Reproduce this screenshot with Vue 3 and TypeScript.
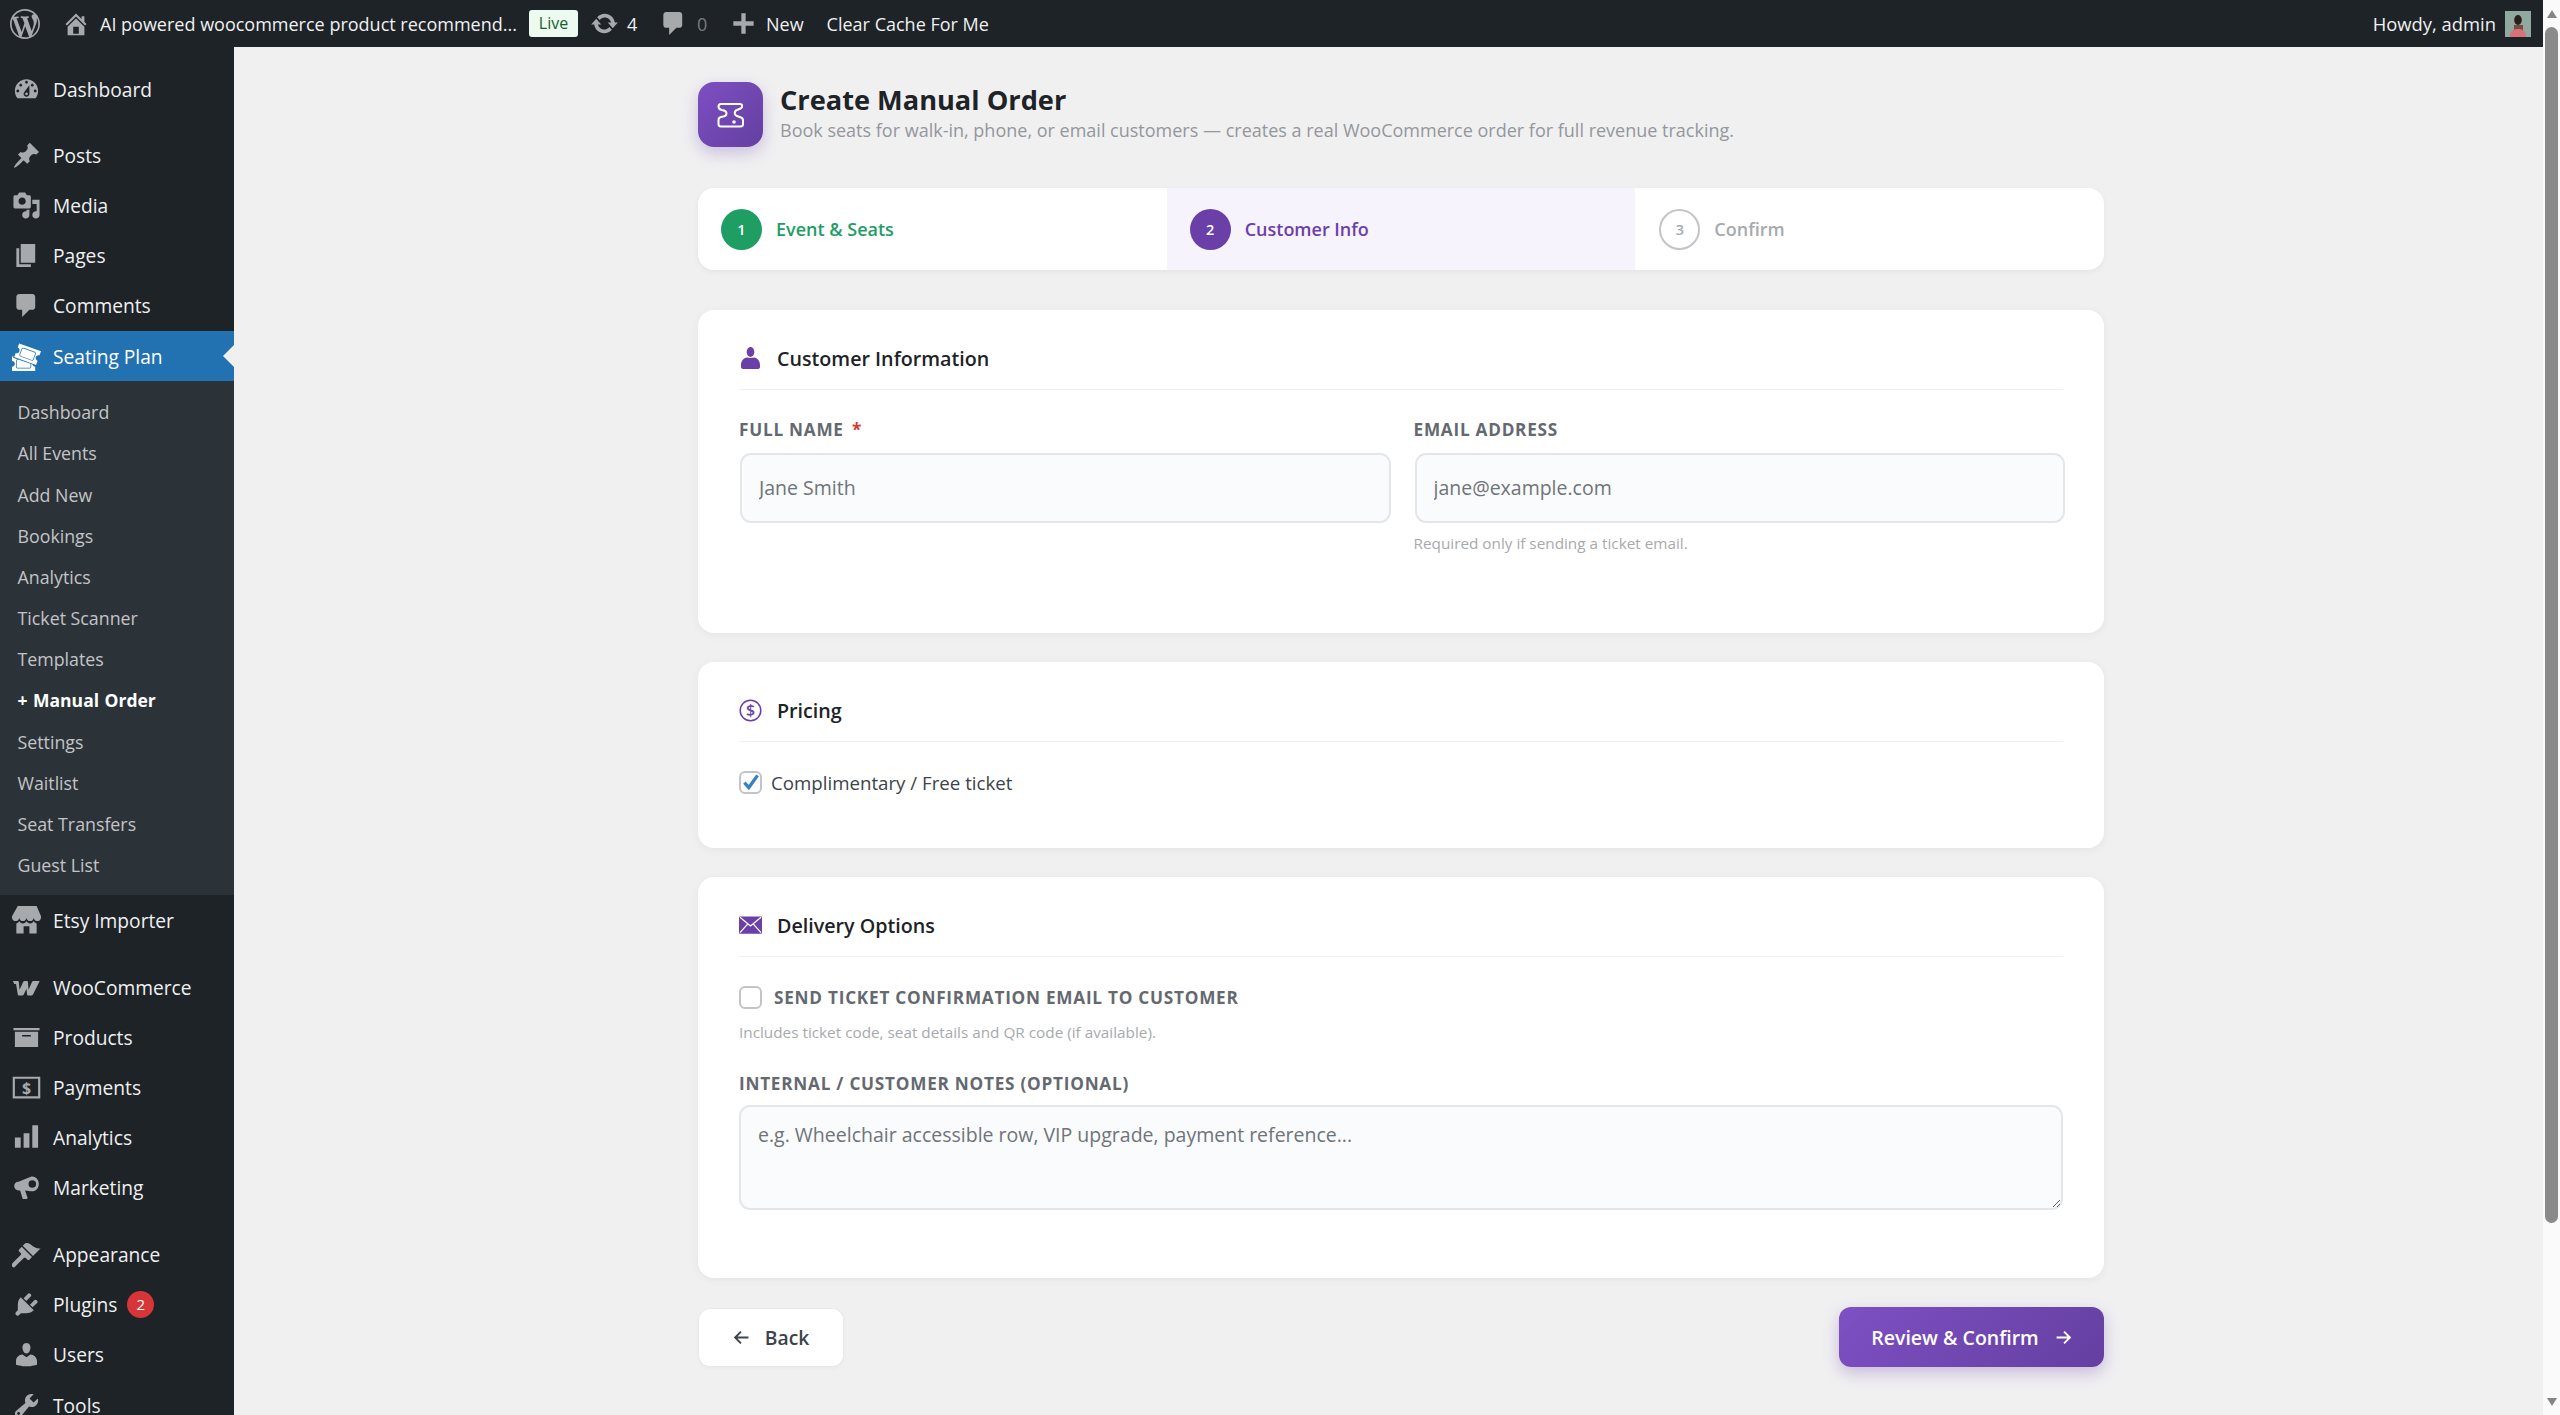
<script setup lang="ts">
interface MenuItem {
  label: string
  d: string
  glyph?: string
  badge?: string
  gap?: boolean
  active?: boolean
}

const icons: Record<string, string> = {
  dashboard:
    'M3.76 16h12.48c1.1-1.37 1.76-3.11 1.76-5 0-4.42-3.58-8-8-8s-8 3.58-8 8c0 1.89.66 3.63 1.76 5zM10 4c.55 0 1 .45 1 1s-.45 1-1 1-1-.45-1-1 .45-1 1-1zM6 6c.55 0 1 .45 1 1s-.45 1-1 1-1-.45-1-1 .45-1 1-1zm8 0c.55 0 1 .45 1 1s-.45 1-1 1-1-.45-1-1 .45-1 1-1zm-5.37 5.55L12 7v6c0 1.1-.9 2-2 2s-2-.9-2-2c0-.57.24-1.08.63-1.45zM4 10c.55 0 1 .45 1 1s-.45 1-1 1-1-.45-1-1 .45-1 1-1zm12 0c.55 0 1 .45 1 1s-.45 1-1 1-1-.45-1-1 .45-1 1-1zm-5 3c0-.55-.45-1-1-1s-1 .45-1 1 .45 1 1 1 1-.45 1-1z',
  pin: 'M10.44 3.02l1.82-1.82 6.36 6.35-1.83 1.82c-1.05-.68-2.48-.57-3.41.36l-.75.75c-.92.93-1.04 2.35-.35 3.41l-1.83 1.82-2.41-2.41-2.8 2.79c-.42.42-3.38 2.71-3.8 2.29s1.86-3.39 2.28-3.81l2.79-2.79L4.1 9.36l1.83-1.82c1.05.69 2.48.57 3.4-.36l.75-.75c.93-.92 1.05-2.35.36-3.41z',
  media:
    'M13 11V4c0-.55-.45-1-1-1h-1.67L9 1H5L3.67 3H2c-.55 0-1 .45-1 1v7c0 .55.45 1 1 1h10c.55 0 1-.45 1-1zM7 4.5c1.38 0 2.5 1.12 2.5 2.5S8.38 9.5 7 9.5 4.5 8.38 4.5 7 5.62 4.5 7 4.5zM14 6h5v10.5c0 1.38-1.12 2.5-2.5 2.5S14 17.88 14 16.5s1.12-2.5 2.5-2.5c.17 0 .34.02.5.05V9h-3V6zm-4 8.05V13h2v3.5c0 1.38-1.12 2.5-2.5 2.5S7 17.88 7 16.5 8.12 14 9.5 14c.17 0 .34.02.5.05z',
  page: 'M6 15V2h10v13H6zm-1 1h8v2H3V5h2v11z',
  comment:
    'M5 2h9c1.1 0 2 .9 2 2v7c0 1.1-.9 2-2 2h-2l-5 5v-5H5c-1.1 0-2-.9-2-2V4c0-1.1.9-2 2-2z',
  tickets:
    'M20 6.38L18.99 9.2v-.01c-.52-.19-1.03-.16-1.53.08s-.85.62-1.04 1.14-.16 1.03.07 1.53c.24.5.62.84 1.15 1.03v.01l-1.01 2.82-15.06-5.38.99-2.79c.52.19 1.03.16 1.53-.08.5-.23.84-.61 1.03-1.13s.16-1.03-.08-1.53c-.23-.49-.61-.83-1.13-1.02L4.93 1zm-4.97 5.69l1.37-3.76c.12-.31.1-.65-.04-.95s-.39-.53-.7-.65L8.14 3.98c-.64-.23-1.37.12-1.6.74L5.17 8.48c-.24.65.1 1.37.74 1.6l7.52 2.74c.14.05.28.08.43.08.52 0 1-.33 1.17-.83zM7.97 4.45l7.51 2.73c.19.07.34.21.43.39.08.18.09.38.02.57l-1.37 3.76c-.13.38-.58.59-.96.45L6.09 9.61c-.38-.14-.59-.57-.45-.96l1.37-3.76c.1-.29.39-.49.7-.49.09 0 .17.02.26.05zm6.82 12.14c.35.27.75.41 1.2.41H16v3H0v-2.96c.55 0 1.03-.2 1.41-.59.39-.38.59-.86.59-1.41s-.2-1.02-.59-1.41-.86-.59-1.41-.59V10h1.05l-.28.8 2.87 1.02c-.51.16-.89.62-.89 1.18v4c0 .69.56 1.25 1.25 1.25h8c.69 0 1.25-.56 1.25-1.25v-1.75l.83.3c.12.43.36.78.71 1.04zM3.25 17v-4c0-.41.34-.75.75-.75h.83l7.92 2.83V17c0 .41-.34.75-.75.75H4c-.41 0-.75-.34-.75-.75z',
  store:
    'M1 10c.41.29.96.43 1.5.43.55 0 1.09-.14 1.5-.43.62-.46 1-1.17 1-2 0 .83.37 1.54 1 2 .41.29.96.43 1.5.43.55 0 1.09-.14 1.5-.43.62-.46 1-1.17 1-2 0 .83.37 1.54 1 2 .41.29.96.43 1.51.43.54 0 1.08-.14 1.49-.43.62-.46 1-1.17 1-2 0 .83.37 1.54 1 2 .41.29.96.43 1.5.43.55 0 1.09-.14 1.5-.43.63-.46 1-1.17 1-2V7l-3-7H4L0 7v1c0 .83.37 1.54 1 2zm2 8.99h5v-5h4v5h5v-7c-.37-.05-.72-.22-1-.43-.63-.45-1-.73-1-1.56 0 .83-.38 1.11-1 1.56-.41.3-.95.43-1.49.44-.55 0-1.1-.14-1.51-.44-.63-.45-1-.73-1-1.56 0 .83-.38 1.11-1 1.56-.41.3-.95.43-1.5.44-.54 0-1.09-.14-1.5-.44-.63-.45-1-.73-1-1.57 0 .84-.38 1.12-1 1.57-.29.21-.63.38-1 .44v6.99z',
  woo: 'M.6 5.6h3.3c.5 0 .8.3.8.8l.5 5.2 2.4-5.2c.2-.5.6-.8 1.1-.8h1.5c.5 0 .8.3.8.8l.4 5.2 2.3-5.2c.2-.5.7-.8 1.2-.8h4.200l-4.600 9.2c-.3.5-.7.8-1.2.8h-2c-.5 0-.8-.3-.9-.8l-.4-4-1.900 4c-.2.5-.7.8-1.2.8h-2c-.5 0-.8-.3-.9-.8L2.800 7.600H1.600z',
  box: 'M1 3.500h18V5H1zM2 6h16v10.500H2zM7 8.300v1h6v-1z',
  money: 'M.5 2.500h19v15H.5zM2 4v12h16V4z',
  bars: 'M2 10h4v7H2zM8 7h4v10H8zM14 1.500h4V17h-4z',
  megaphone:
    'M13 2.500c2.800-.6 5.500 1.700 5.500 5s-2.700 5.600-5.500 5L9 12l1.800 5.300-.6.7H7.400L5.600 12H4.500C2.600 12 1.500 10.500 1.500 9s1.100-3 3-3l8.500-3.500zM14 5a2.600 2.600 0 1 0 0 5.200A2.600 2.600 0 0 0 14 5z',
  brush:
    'M14.48 11.06L7.41 3.99l1.5-1.5c.5-.56 2.3-.47 3.51.32 1.21.8 1.43 1.28 2.91 2.1 1.18.64 2.45 1.26 4.45.85zm-.71.71L6.7 4.7 4.93 6.47c-.39.39-.39 1.02 0 1.41l1.06 1.06c.39.39.39 1.03 0 1.42-.6.6-6.19 6.19-6.19 6.19-.39.39-.39 1.02 0 1.41l.71.71c.39.39 1.02.39 1.41 0 0 0 5.59-5.59 6.19-6.19.39-.39 1.03-.39 1.42 0l1.06 1.06c.39.39 1.02.39 1.41 0z',
  plug: 'M13.11 4.36L9.87 7.6 8 5.73l3.24-3.24c.35-.34 1.05-.2 1.56.32.52.51.66 1.21.31 1.55zm-8 1.77l.91-1.12 9.01 9.01-1.19.84c-.71.71-2.63 1.16-3.82 1.16H6.14L4.9 17.26c-.59.59-1.54.59-2.12 0-.59-.58-.59-1.53 0-2.12l1.24-1.24v-3.88c0-1.13.4-3.19 1.09-3.89zm7.26 3.97l3.24-3.24c.34-.35 1.04-.21 1.55.31.52.51.66 1.21.31 1.55l-3.24 3.25z',
  users:
    'M10 9.25c-2.27 0-2.73-3.44-2.73-3.44C7 4.02 7.82 2 9.97 2c2.16 0 2.98 2.02 2.71 3.81 0 0-.41 3.44-2.68 3.44zm0 2.57L12.72 10c2.39 0 4.52 2.33 4.52 4.53v2.49s-3.65 1.13-7.24 1.13c-3.65 0-7.24-1.13-7.24-1.13v-2.49c0-2.25 1.94-4.48 4.47-4.48z',
  tools:
    'M16.68 9.77c-1.34 1.34-3.3 1.67-4.95.99l-5.41 6.52c-.99.99-2.59.99-3.58 0s-.99-2.59 0-3.57l6.52-5.42c-.68-1.65-.35-3.61.99-4.95 1.28-1.28 3.12-1.62 4.72-1.06l-2.89 2.89 2.82 2.82 2.86-2.87c.53 1.58.18 3.39-1.08 4.65zM3.81 16.21c.4.39 1.04.39 1.43 0 .4-.4.4-1.04 0-1.43-.39-.4-1.03-.4-1.43 0-.39.39-.39 1.03 0 1.43z',
}

const wpLogo =
  'M20 10c0-5.51-4.49-10-10-10C4.48 0 0 4.49 0 10c0 5.52 4.48 10 10 10 5.51 0 10-4.48 10-10zM7.78 15.37L4.37 6.22c.55-.02 1.17-.08 1.17-.08.5-.06.44-1.13-.06-1.11 0 0-1.45.11-2.37.11-.18 0-.37 0-.58-.01C4.12 2.69 6.87 1.11 10 1.11c2.33 0 4.45.87 6.05 2.34-.68-.11-1.65.39-1.65 1.58 0 .74.45 1.36.9 2.1.35.61.55 1.36.55 2.46 0 1.49-1.4 5-1.4 5l-3.03-8.37c.54-.02.82-.17.82-.17.5-.05.44-1.25-.06-1.22 0 0-1.44.12-2.38.12-.87 0-2.33-.12-2.33-.12-.5-.03-.56 1.2-.06 1.22l.92.08 1.26 3.41zM17.41 10c.24-.64.74-1.87.43-4.25.7 1.29 1.05 2.71 1.05 4.25 0 3.29-1.73 6.24-4.4 7.78.97-2.59 1.94-5.2 2.92-7.78zM6.1 18.09C3.12 16.65 1.11 13.53 1.11 10c0-1.3.23-2.48.72-3.59C3.25 10.3 4.67 14.2 6.1 18.09zm4.03-6.63l2.58 6.98c-.86.29-1.76.45-2.71.45-.79 0-1.57-.11-2.29-.33.81-2.38 1.62-4.74 2.42-7.1z'
const homeIcon =
  'M16 8.5l1.53 1.53-1.06 1.06L10 4.62l-6.47 6.47-1.06-1.06L10 2.5l4 4v-2h2v4zm-6-2.46l6 5.99V18H4v-5.97zM12 17v-5H8v5h4z'
const updateIcon =
  'M10.2 3.28c3.53 0 6.43 2.61 6.92 6h2.08l-3.5 4-3.5-4h2.32c-.45-1.97-2.21-3.45-4.32-3.45-1.45 0-2.73.71-3.54 1.78L4.95 5.66C6.23 4.2 8.11 3.28 10.2 3.28zm-.4 13.44c-3.52 0-6.43-2.61-6.92-6H.8l3.5-4c1.17 1.33 2.33 2.67 3.5 4H5.48c.45 1.97 2.21 3.45 4.32 3.45 1.45 0 2.73-.71 3.54-1.78l1.71 1.95c-1.28 1.46-3.15 2.38-5.25 2.38z'

const topMenu: MenuItem[] = [
  { label: 'Dashboard', d: icons.dashboard },
  { label: 'Posts', d: icons.pin, gap: true },
  { label: 'Media', d: icons.media },
  { label: 'Pages', d: icons.page },
  { label: 'Comments', d: icons.comment },
  { label: 'Seating Plan', d: icons.tickets, active: true },
]

const subMenu = [
  'Dashboard',
  'All Events',
  'Add New',
  'Bookings',
  'Analytics',
  'Ticket Scanner',
  'Templates',
  '+ Manual Order',
  'Settings',
  'Waitlist',
  'Seat Transfers',
  'Guest List',
]

const bottomMenu: MenuItem[] = [
  { label: 'Etsy Importer', d: icons.store },
  { label: 'WooCommerce', d: icons.woo, gap: true },
  { label: 'Products', d: icons.box },
  { label: 'Payments', d: icons.money, glyph: '$' },
  { label: 'Analytics', d: icons.bars },
  { label: 'Marketing', d: icons.megaphone },
  { label: 'Appearance', d: icons.brush, gap: true },
  { label: 'Plugins', d: icons.plug, badge: '2' },
  { label: 'Users', d: icons.users },
  { label: 'Tools', d: icons.tools },
]

const steps = [
  { n: 1, label: 'Event & Seats', state: 'done' },
  { n: 2, label: 'Customer Info', state: 'current' },
  { n: 3, label: 'Confirm', state: 'todo' },
]
</script>

<template>
  <div class="screen">
    <div class="page">
      <header class="adminbar">
        <svg class="bar-logo" viewBox="0 0 20 20"><path :d="wpLogo" fill-rule="evenodd" /></svg>
        <svg class="bar-home" viewBox="0 0 20 20"><path :d="homeIcon" /></svg>
        <span class="bar-site">AI powered woocommerce product recommend...</span>
        <span class="bar-live">Live</span>
        <svg class="bar-update" viewBox="0 0 20 20"><path :d="updateIcon" /></svg>
        <span class="bar-count">4</span>
        <svg class="bar-comment" viewBox="0 0 20 20"><path :d="icons.comment" /></svg>
        <span class="bar-zero">0</span>
        <svg class="bar-plus" viewBox="0 0 20 20"><path d="M17 8.500v3h-5.500V17h-3v-5.500H3v-3h5.500V3h3v5.500z" /></svg>
        <span class="bar-new">New</span>
        <span class="bar-cache">Clear Cache For Me</span>
        <span class="bar-howdy">Howdy, admin</span>
        <svg class="bar-avatar" viewBox="0 0 26 26">
          <rect width="26" height="26" fill="#8fa8a0" />
          <rect x="9" y="14" width="9" height="6" fill="#7a4a42" />
          <ellipse cx="13" cy="9" rx="3.800" ry="5" fill="#2b1d19" />
          <path d="M5 26c0-6 3-8 8-8s8 2 8 8z" fill="#d9707a" />
        </svg>
      </header>

      <div class="body">
        <nav class="sidebar">
          <a
            v-for="item in topMenu"
            :key="item.label"
            class="menu-item"
            :class="{ gap: item.gap, active: item.active }"
          >
            <svg class="menu-icon" viewBox="0 0 20 20"><path :d="item.d" fill-rule="evenodd" /></svg>
            <span>{{ item.label }}</span>
          </a>
          <ul class="submenu">
            <li v-for="sub in subMenu" :key="sub" :class="{ selected: sub.startsWith('+') }">{{ sub }}</li>
          </ul>
          <a v-for="item in bottomMenu" :key="item.label" class="menu-item lower" :class="{ gap: item.gap }">
            <svg class="menu-icon" viewBox="0 0 20 20">
              <path :d="item.d" fill-rule="evenodd" />
              <text v-if="item.glyph" x="10" y="14.500" text-anchor="middle" class="menu-glyph">{{ item.glyph }}</text>
            </svg>
            <span>{{ item.label }}</span>
            <b v-if="item.badge" class="menu-badge">{{ item.badge }}</b>
          </a>
        </nav>

        <main class="main">
          <div class="wrap">
            <div class="page-head">
              <div class="page-icon">
                <svg viewBox="0 0 28 26" width="28" height="26" fill="none" stroke="#fff" stroke-width="2">
                  <path d="M4 2H23C25.500 2 26 5.500 23.500 6.500L20 8C17 9 17 13 20 14L24 15.500C25.500 16 26 17 26 18.500V22C26 23.500 25 24.500 23.500 24.500H4C2.500 24.500 1.500 23.500 1.500 22V18C1.500 16 3 15 5 14.800C8 14.500 9.500 13 9.500 11.500C9.500 9.500 8 8.500 5 8C2.500 7.500 1.500 6.500 1.500 4.500C1.500 3 2.500 2 4 2Z" />
                  <circle cx="17" cy="20" r="0.800" fill="#fff" />
                </svg>
              </div>
              <div>
                <h1>Create Manual Order</h1>
                <p>Book seats for walk-in, phone, or email customers — creates a real WooCommerce order for full revenue tracking.</p>
              </div>
            </div>

            <div class="steps">
              <div v-for="step in steps" :key="step.n" class="step" :class="step.state">
                <span class="step-num">{{ step.n }}</span>
                <span class="step-label">{{ step.label }}</span>
              </div>
            </div>

            <section class="card customer">
              <h2>
                <svg viewBox="0 0 20 22" width="20" height="22"><ellipse cx="10" cy="5" rx="3.800" ry="5" /><path d="M10 11l-3.500-.5C3 11 .5 14 .5 18v2c0 1 1 2 2 2h15c1 0 2-1 2-2v-2c0-4-2.500-7-6-7.500z" /></svg>
                Customer Information
              </h2>
              <div class="field-grid">
                <div class="field">
                  <label>Full Name <em>*</em></label>
                  <input type="text" placeholder="Jane Smith" />
                </div>
                <div class="field">
                  <label>Email Address</label>
                  <input type="email" placeholder="jane@example.com" />
                  <small>Required only if sending a ticket email.</small>
                </div>
              </div>
            </section>

            <section class="card pricing">
              <h2>
                <svg viewBox="0 0 23 23" width="23" height="23">
                  <circle cx="11.500" cy="11.500" r="10.300" fill="none" stroke="#6b3fa8" stroke-width="1.500" />
                  <text x="11.500" y="17.200" text-anchor="middle" class="icon-dollar">$</text>
                </svg>
                Pricing
              </h2>
              <div class="check-row">
                <span class="check">
                  <svg viewBox="0 0 20 20" width="22" height="22"><path d="M4 10.500l4 4.500 8-11" fill="none" stroke="#3582c4" stroke-width="3" /></svg>
                </span>
                <span class="check-text">Complimentary / Free ticket</span>
              </div>
            </section>

            <section class="card delivery">
              <h2>
                <svg viewBox="0 0 24 18" width="24" height="18">
                  <rect width="24" height="18" rx="1" />
                  <path d="M1 1l11 9 11-9M1 17l8-9M23 17l-8-9" fill="none" stroke="#fff" stroke-width="1.300" />
                </svg>
                Delivery Options
              </h2>
              <div class="check-row">
                <span class="check"></span>
                <span class="check-caps">Send ticket confirmation email to customer</span>
              </div>
              <small class="delivery-hint">Includes ticket code, seat details and QR code (if available).</small>
              <div class="field notes">
                <label>Internal / Customer Notes (optional)</label>
                <textarea placeholder="e.g. Wheelchair accessible row, VIP upgrade, payment reference..."></textarea>
              </div>
            </section>

            <div class="actions">
              <button class="btn-back">
                <svg viewBox="0 0 16 16" width="17" height="17" fill="none" stroke="currentColor" stroke-width="1.800"><path d="M14.500 8H2M7.500 2.500L2 8l5.500 5.500" /></svg>
                Back
              </button>
              <button class="btn-next">
                Review &amp; Confirm
                <svg viewBox="0 0 16 16" width="17" height="17" fill="none" stroke="currentColor" stroke-width="1.800"><path d="M1.500 8H14M8.500 2.500L14 8l-5.500 5.500" /></svg>
              </button>
            </div>
          </div>
        </main>
      </div>
    </div>

    <div class="scrollbar">
      <i class="arrow-up"></i>
      <i class="thumb"></i>
      <i class="arrow-down"></i>
    </div>
  </div>
</template>

<style scoped>
.screen {
  display: flex;
  height: 1415px;
  overflow: hidden;
  background: #f0f0f1;
  font-family: 'Open Sans', 'Noto Sans', sans-serif;
  color: #1d2327;
}
.page {
  flex: 1;
  min-width: 0;
  display: flex;
  flex-direction: column;
}

/* admin bar */
.adminbar {
  height: 47px;
  flex-shrink: 0;
  display: flex;
  align-items: center;
  padding-left: 10px;
  background: #1d2327;
  color: #f0f0f1;
  font-size: 18px;
  white-space: nowrap;
}
.adminbar svg {
  flex-shrink: 0;
  fill: #a7aaad;
}
.bar-logo {
  width: 30px;
  height: 30px;
}
.bar-home {
  width: 28px;
  height: 28px;
  margin-left: 22px;
}
.bar-site {
  margin-left: 10px;
  width: 420px;
}
.bar-live {
  margin-left: 9px;
  width: 49px;
  height: 27px;
  line-height: 27px;
  text-align: center;
  background: #edfaef;
  color: #17602d;
  border-radius: 3px;
  font-size: 16px;
  font-weight: 500;
}
.bar-update {
  width: 29px;
  height: 29px;
  margin-left: 12px;
}
.bar-count {
  margin-left: 8px;
  width: 12px;
}
.bar-comment {
  width: 29px;
  height: 29px;
  margin-left: 20px;
}
.bar-zero {
  margin-left: 9px;
  color: #787c82;
  width: 12px;
}
.bar-plus {
  width: 29px;
  height: 29px;
  margin-left: 20px;
}
.bar-new {
  margin-left: 8px;
}
.bar-cache {
  margin-left: 23px;
}
.bar-howdy {
  margin-left: auto;
  font-size: 18.400px;
}
.bar-avatar {
  width: 26px;
  height: 26px;
  margin-left: 9px;
  margin-right: 12px;
}

.body {
  flex: 1;
  min-height: 0;
  display: flex;
}

/* sidebar */
.sidebar {
  width: 234px;
  flex-shrink: 0;
  padding-top: 17px;
  background: #1d2327;
  overflow: hidden;
  font-size: 19.200px;
}
.menu-item {
  position: relative;
  display: flex;
  align-items: center;
  height: 50.200px;
  padding-left: 12px;
  color: #f0f0f1;
}
.menu-item.gap {
  margin-top: 16px;
}
.menu-item.lower.gap {
  margin-top: 16.500px;
}
.menu-item.active {
  background: #2271b1;
  color: #fff;
}
.menu-item.active::after {
  content: '';
  position: absolute;
  right: 0;
  top: 50%;
  margin-top: -11px;
  border: 11px solid transparent;
  border-left: 0;
  border-right-color: #f0f0f1;
}
.menu-icon {
  width: 29px;
  height: 29px;
  margin-right: 12px;
  flex-shrink: 0;
  fill: #a7aaad;
}
.active .menu-icon {
  fill: #fff;
}
.menu-glyph {
  font-size: 11px;
  font-weight: 700;
  font-family: 'Open Sans', sans-serif;
}
.menu-badge {
  margin-left: 10px;
  width: 27px;
  height: 27px;
  line-height: 27px;
  border-radius: 50%;
  background: #d63638;
  color: #fff;
  text-align: center;
  font-size: 15px;
  font-weight: 400;
}
.submenu {
  margin: 0;
  padding: 11px 0 9px;
  list-style: none;
  background: #2c3338;
  color: #c3c4c7;
  font-size: 17.800px;
}
.submenu li {
  height: 41.200px;
  line-height: 41.200px;
  padding-left: 17.500px;
}
.submenu li.selected {
  color: #fff;
  font-weight: 700;
  font-size: 17.500px;
  word-spacing: 1px;
}

/* main column */
.main {
  flex: 1;
  min-width: 0;
  padding: 35px 0 0 464px;
}
.wrap {
  width: 1406px;
}
.page-head {
  display: flex;
  gap: 17px;
}
.page-icon {
  width: 65px;
  height: 65px;
  display: flex;
  align-items: center;
  justify-content: center;
  flex-shrink: 0;
  border-radius: 16px;
  background: linear-gradient(135deg, #7d4fc2, #643fa0);
  box-shadow: 0 6px 16px rgba(107, 63, 168, 0.28);
}
.page-head h1 {
  margin: 0;
  font-size: 27.200px;
  line-height: 36px;
  font-weight: 700;
}
.page-head p {
  margin: 0;
  font-size: 18px;
  line-height: 24px;
  color: #94979c;
}

/* steps */
.steps {
  margin-top: 41px;
  height: 82px;
  display: grid;
  grid-template-columns: repeat(3, 1fr);
  overflow: hidden;
  border-radius: 16px;
  background: #fff;
  box-shadow: 0 2px 6px rgba(0, 0, 0, 0.05);
}
.step {
  display: flex;
  align-items: center;
  gap: 14px;
  padding-left: 23px;
  font-size: 18px;
  font-weight: 600;
}
.step-num {
  width: 41px;
  height: 41px;
  display: flex;
  align-items: center;
  justify-content: center;
  box-sizing: border-box;
  border-radius: 50%;
  font-size: 14.500px;
  color: #fff;
}
.done .step-num {
  background: #1e9e63;
}
.done .step-label {
  color: #1e9e63;
}
.current {
  background: #f7f3fd;
}
.current .step-num {
  background: #6b3fa8;
}
.current .step-label {
  color: #6b3fa8;
}
.todo {
  padding-left: 24px;
}
.todo .step-num {
  border: 2px solid #c3c4c7;
  color: #a7aaad;
}
.todo .step-label {
  color: #a7aaad;
}

/* cards */
.card {
  padding: 33px 41px 0;
  border-radius: 16px;
  background: #fff;
  box-shadow: 0 2px 10px rgba(0, 0, 0, 0.05);
}
.card + .card {
  margin-top: 29px;
}
.customer {
  margin-top: 40px;
  padding-bottom: 80px;
}
.pricing {
  padding-bottom: 54px;
}
.delivery {
  padding-bottom: 68px;
}
.card h2 {
  margin: 0 0 28px;
  height: 30px;
  padding-bottom: 16px;
  display: flex;
  align-items: center;
  gap: 15px;
  border-bottom: 1px solid #f0f0f1;
  font-size: 19.700px;
  font-weight: 600;
}
.card h2 svg {
  width: 23px;
  fill: #6b3fa8;
}
.icon-dollar {
  font-size: 16px;
  font-family: 'Open Sans', sans-serif;
}
.field-grid {
  display: grid;
  grid-template-columns: 1fr 1fr;
  gap: 24px;
  margin-left: 1px;
  margin-right: -2px;
}
.field {
  display: flex;
  flex-direction: column;
}
.field label {
  height: 24px;
  line-height: 24px;
  margin-bottom: 11px;
  margin-left: -1px;
  font-size: 17.200px;
  font-weight: 700;
  letter-spacing: 0.75px;
  text-transform: uppercase;
  color: #646970;
}
.field label em {
  margin-left: 3px;
  font-style: normal;
  color: #d63638;
}
.field input,
.field textarea {
  box-sizing: border-box;
  width: 100%;
  border: 2px solid #e4e6e9;
  border-radius: 11px;
  background: #f9fbfc;
  padding: 0 17px;
  font-family: inherit;
  font-size: 19.500px;
  color: #1d2327;
  outline: none;
}
.field input {
  height: 70px;
  padding-bottom: 2px;
}
.field textarea {
  display: block;
  height: 105px;
  padding: 14px 17px;
}
.field input::placeholder,
.field textarea::placeholder {
  color: #6f7479;
  opacity: 1;
}
.field small,
.delivery-hint {
  display: block;
  margin-top: 10px;
  margin-left: -1px;
  line-height: 20px;
  font-size: 15.300px;
  color: #a7aaad;
}
.delivery-hint {
  margin-top: 13px;
  margin-left: 0;
}
.check-row {
  display: flex;
  align-items: center;
  height: 24px;
}
.check {
  width: 23px;
  height: 23px;
  box-sizing: border-box;
  display: flex;
  align-items: center;
  justify-content: center;
  flex-shrink: 0;
  border: 2px solid #c3c4c7;
  border-radius: 6px;
  background: #fff;
}
.check svg {
  flex-shrink: 0;
}
.check-text {
  margin-left: 9px;
  font-size: 18.700px;
  font-weight: 500;
  color: #3c434a;
}
.check-caps {
  margin-left: 12px;
  font-size: 17.200px;
  font-weight: 700;
  letter-spacing: 0.75px;
  text-transform: uppercase;
  color: #646970;
}
.notes {
  margin-top: 30px;
}
.notes label {
  margin-left: 0;
  margin-bottom: 9px;
}

/* footer buttons */
.actions {
  margin-top: 29px;
  display: flex;
  align-items: center;
  justify-content: space-between;
}
.actions button {
  display: flex;
  align-items: center;
  justify-content: center;
  border: 0;
  font-family: inherit;
  font-size: 19.300px;
  font-weight: 600;
}
.btn-back {
  width: 144px;
  height: 57px;
  margin-left: 1px;
  gap: 15px;
  border-radius: 11px;
  background: #fff;
  color: #3c434a;
  box-shadow: 0 0 0 1px #e8e9eb, 0 2px 5px rgba(0, 0, 0, 0.04);
}
.actions .btn-next {
  width: 265px;
  height: 60px;
  gap: 16px;
  border-radius: 12px;
  background: linear-gradient(135deg, #7e50c4, #643fa0);
  color: #fff;
  font-size: 19.500px;
  box-shadow: 0 6px 16px rgba(107, 63, 168, 0.3);
}

/* page scrollbar */
.scrollbar {
  width: 17px;
  flex-shrink: 0;
  display: flex;
  flex-direction: column;
  align-items: center;
  background: #fafafa;
}
.arrow-up,
.arrow-down {
  width: 0;
  height: 0;
  border-left: 5.500px solid transparent;
  border-right: 5.500px solid transparent;
}
.arrow-up {
  margin-top: 10px;
  border-bottom: 8px solid #858585;
}
.arrow-down {
  margin-top: auto;
  margin-bottom: 9px;
  border-top: 8px solid #858585;
}
.thumb {
  width: 13px;
  height: 1196px;
  margin-top: 9px;
  border-radius: 7px;
  background: #8a8a8a;
}
</style>

<style>
body {
  margin: 0;
}
</style>
